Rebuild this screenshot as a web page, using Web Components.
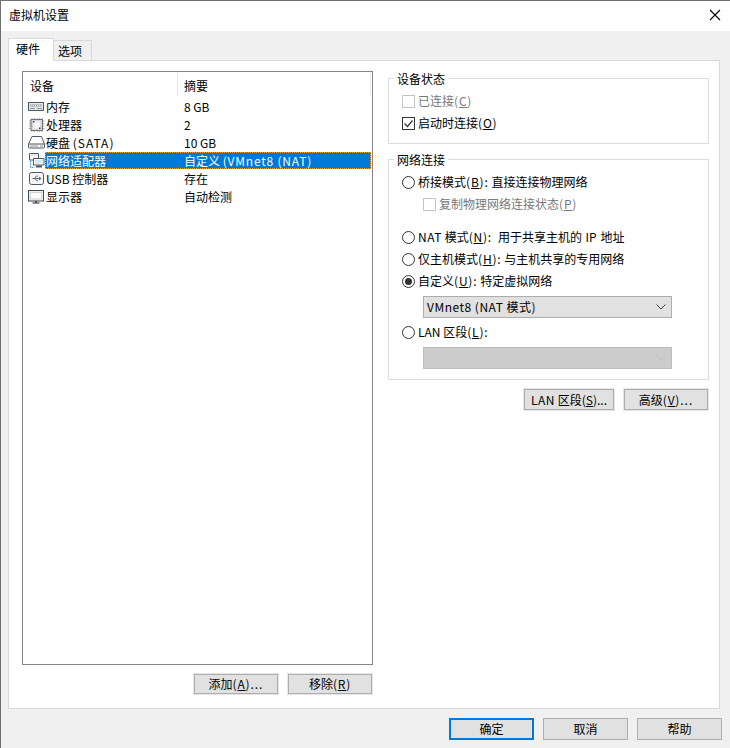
<!doctype html>
<html lang="zh-CN"><head><meta charset="utf-8"><title>虚拟机设置</title>
<style>
html,body{margin:0;padding:0;height:100%;background:#fff}
body{font:12px/16px "Noto Sans CJK SC","Liberation Sans",sans-serif;color:#000}
.p{letter-spacing:.8px}
.d{letter-spacing:1px}
.w{letter-spacing:.5px}
.ip{word-spacing:1px}
.s1{letter-spacing:1px}
.c{letter-spacing:.5px}
.cn{word-spacing:4px}
</style></head><body>
<vm-dialog heading="虚拟机设置">
  <vm-tabs slot="tabs"></vm-tabs>
  <vm-panel>
    <div slot="left">
      <vm-list>
        <vm-row icon="mem">内存<span slot="value">8 GB</span></vm-row>
        <vm-row icon="cpu">处理器<span slot="value">2</span></vm-row>
        <vm-row icon="disk">硬盘 <span class="s1">(SATA)</span><span slot="value">10 GB</span></vm-row>
        <vm-row icon="net" selected>网络适配器<span slot="value">自定义 <span class="p">(VMnet8 (NAT)</span></span></vm-row>
        <vm-row icon="usb">USB 控制器<span slot="value">存在</span></vm-row>
        <vm-row icon="mon">显示器<span slot="value">自动检测</span></vm-row>
      </vm-list>
    </div>
    <vm-btn slot="leftbtn">添加<span class="p">(<u>A</u>)</span><span class="d">...</span></vm-btn>
    <vm-btn slot="leftbtn">移除<span class="p">(<u>R</u>)</span></vm-btn>
    <vm-group slot="right" legend="设备状态" pb="9">
      <vm-choice type="check" disabled>已连接<span class="p">(<u>C</u>)</span></vm-choice>
      <vm-choice type="check" checked>启动时连接<span class="p">(<u>O</u>)</span></vm-choice>
    </vm-group>
    <vm-group slot="right" legend="网络连接" pb="10">
      <vm-choice type="radio">桥接模式<span class="p">(<u>B</u>)</span><span class="c">: </span>直接连接物理网络</vm-choice>
      <vm-choice type="check" disabled indent>复制物理网络连接状态<span class="p">(<u>P</u>)</span></vm-choice>
      <vm-choice type="radio" gap="11"><span class="w">NAT</span> 模式<span class="p">(<u>N</u>)</span><span class="cn">: </span>用于共享主机的<span class="ip"> IP </span>地址</vm-choice>
      <vm-choice type="radio">仅主机模式<span class="p">(<u>H</u>)</span><span class="c">: </span>与主机共享的专用网络</vm-choice>
      <vm-choice type="radio" checked>自定义<span class="p">(<u>U</u>)</span><span class="c">: </span>特定虚拟网络</vm-choice>
      <vm-select gap="4"><span class="w">VMnet8 (NAT 模式)</span></vm-select>
      <vm-choice type="radio" gap="3">LAN 区段<span class="p">(<u>L</u>)</span>:</vm-choice>
      <vm-select gap="4" disabled></vm-select>
    </vm-group>
    <vm-btn slot="rightbtn" w="92" h="23"><span class="w">LAN</span> 区段(<u>S</u>)...</vm-btn>
    <vm-btn slot="rightbtn" h="23">高级<span class="p">(<u>V</u>)</span><span class="d">...</span></vm-btn>
  </vm-panel>
  <vm-btn slot="footer" primary w="85">确定</vm-btn>
  <vm-btn slot="footer" w="85">取消</vm-btn>
  <vm-btn slot="footer" w="85">帮助</vm-btn>
</vm-dialog>
<script>
const def=(n,html)=>customElements.define(n,class extends HTMLElement{
  constructor(){super();this.attachShadow({mode:'open'});}
  connectedCallback(){this.shadowRoot.innerHTML=typeof html==='function'?html(this):html;}
});
def('vm-dialog',el=>`<style>
:host{display:flex;flex-direction:column;width:730px;height:748px;box-sizing:border-box;border-top:1px solid #707070;border-left:1px solid #707070;background:#f0f0f0}
.t{height:30px;box-sizing:border-box;flex:none;background:#fff;display:flex;align-items:center;justify-content:space-between;padding:0 9px 2px 8px}
.t svg{display:block}
.m{flex:1;display:flex;flex-direction:column;padding:0 8px 0 7px;min-height:0}
.f{flex:none;display:flex;justify-content:flex-end;gap:9px;padding:9px 0 8px}
</style>
<div class="t"><span>${el.getAttribute('heading')}</span><svg width="12" height="12" viewBox="0 0 12 12"><path d="M1 1l10 10M11 1L1 11" stroke="#000" stroke-width="1.1" fill="none"/></svg></div>
<div class="m"><slot name="tabs"></slot><slot></slot><div class="f"><slot name="footer"></slot></div></div>`);
def('vm-tabs',`<style>
:host{display:flex;align-items:flex-end;height:29px;flex:none;position:relative;z-index:1}
div{box-sizing:border-box;border:1px solid #d9d9d9;border-bottom:0}
.a{width:46px;height:23px;background:#fff;margin-bottom:-1px;line-height:20px;padding-left:7px}
.b{width:38px;height:20px;background:#f0f0f0;border-left:0;line-height:20px;padding-left:4px}
</style><div class="a">硬件</div><div class="b">选项</div>`);
def('vm-panel',`<style>
:host{display:flex;flex:1;min-height:0;box-sizing:border-box;margin-right:2px;background:#fff;border:1px solid #d9d9d9;padding:10px 10px 13px 13px;gap:15px}
.l{width:351px;display:flex;flex-direction:column;flex:none}
::slotted([slot=left]){flex:1;display:flex;min-height:0}
.br{display:flex;justify-content:flex-end;gap:8px;margin-top:8px}
.r{width:321px;flex:none;display:flex;flex-direction:column}
.rb{display:flex;justify-content:flex-end;gap:8px}
</style>
<div class="l"><slot name="left"></slot><div class="br"><slot name="leftbtn"></slot></div></div>
<div class="r"><slot name="right"></slot><div class="rb"><slot name="rightbtn"></slot></div></div>`);
def('vm-list',`<style>
:host{display:block;flex:1;box-sizing:border-box;border:1px solid #828790;background:#fff}
.h{display:flex;height:26px}
.h div{height:24px;line-height:27px;box-sizing:border-box}
.c1{width:155px;padding-left:7px;border-right:1px solid #e5e5e5}
.c2{flex:1;padding-left:6px;border-right:1px solid #e5e5e5;margin-right:1px}
</style><div class="h"><div class="c1">设备</div><div class="c2">摘要</div></div><slot></slot>`);
const D='#4d5761',G='#8b939b';
const icons={
mem:`<rect x=".5" y="4.500" width="15" height="8" fill="#e4e7ea" stroke="${D}"/><path d="M2 6.500h12v2H2z" fill="#9aa3ab"/><path d="M3 7.500h1M5 7.500h1M7 7.500h1M9 7.500h1M11 7.500h1M13 7.500h1" stroke="#e8e8e8"/><path d="M2 10.500h5M9 10.500h5" stroke="${G}"/>`,
cpu:`<path d="M4 2v14M6.500 2v14M9 2v14M11.500 2v14M14 2v14M1 5h15.500M1 7.500h15.500M1 10h15.500M1 12.500h15.500" stroke="#a4a9ae"/><rect x="3" y="3.500" width="11.500" height="11" fill="#d6d8da" stroke="#6d757c"/><rect x="5.500" y="5.500" width="6.500" height="7" fill="#f6f6f6"/><path d="M5 5h1.500v1.500H5zM11 11.500h1.500V13H11z" fill="#3e474f"/>`,
disk:`<path d="M4 2.500h9.500l3 7.500v3a1 1 0 0 1-1 1H1.500a1 1 0 0 1-1-1v-3z" fill="#fdfdfd" stroke="${D}"/><path d="M.5 10h16" stroke="${D}"/><path d="M2 12h8M12 12h3" stroke="${G}"/>`,
net:`<path d="M1.500 1.500h9v6.500h-9z" fill="#fff" stroke="${D}"/><path d="M3 3h6" stroke="#c9d3dc"/><path d="M5.500 6.500h10.500v6.500h-10.500z" fill="#fff" stroke="${D}"/><path d="M7 8h7.500v3.500H7z" fill="#d5e7f5"/><path d="M8 14.500h6" stroke="${D}" stroke-width="2"/><path d="M2.500 9v6.500h4" fill="none" stroke="#2f8fd8" stroke-dasharray="1.500 1"/>`,
usb:`<rect x="1.500" y="2.500" width="14" height="12" rx="2" fill="#f3f4f5" stroke="${D}"/><path d="M4.500 8.500h8" stroke="#5f6972"/><path d="M11 6.500l2.500 2-2.500 2z" fill="#5f6972"/><path d="M6.500 8.500l2-2.500h1.500M7 8.500l1.500 2H10" fill="none" stroke="#5f6972"/>`,
mon:`<rect x=".5" y="2.500" width="15" height="10.500" fill="#eef0f2" stroke="#3c454e"/><rect x="2.500" y="4.500" width="11" height="6.500" fill="#fbfbfb" stroke="#b9c0c6" stroke-width=".6"/><path d="M8 13v1.500" stroke="#3c454e" stroke-width="2"/><path d="M4.500 15h7" stroke="#3c454e" stroke-width="1.200"/>`};
def('vm-row',el=>`<style>
:host{display:flex;height:18px;padding-left:5px;padding-right:1px}
svg{width:17px;height:18px;flex:none;display:block}
.s{flex:1;display:flex;height:17px;line-height:17px;box-sizing:border-box;}
.n{width:139px;padding-left:1px;box-sizing:border-box}
.sel{background:#0078d7;color:#fff;outline:1px dotted #e8a33a;outline-offset:-1px}
</style><svg viewBox="0 0 17 18">${icons[el.getAttribute('icon')]}</svg><div class="s ${el.hasAttribute('selected')?'sel':''}"><span class="n"><slot></slot></span><span><slot name="value"></slot></span></div>`);
def('vm-group',el=>`<style>
:host{display:block;margin-bottom:8px}
fieldset{margin:0;padding:4px 0 ${el.getAttribute('pb')}px;border:1px solid #dcdcdc;min-width:0}
legend{margin-left:5px;padding:0 3px;height:15px;line-height:16px}
div{padding-left:13px}
</style><fieldset><legend>${el.getAttribute('legend')}</legend><div><slot></slot></div></fieldset>`);
def('vm-choice',el=>{
 const on=el.hasAttribute('checked'),dis=el.hasAttribute('disabled'),c=dis?'#c4c4c4':'#333';
 const mark=el.getAttribute('type')==='radio'
  ?`<svg width="13" height="13" viewBox="0 0 13 13"><circle cx="6.500" cy="6.500" r="6" fill="#fff" stroke="#333"/>${on?'<circle cx="6.500" cy="6.500" r="3.500" fill="#333"/>':''}</svg>`
  :`<svg width="13" height="13" viewBox="0 0 13 13"><rect x=".5" y=".5" width="12" height="12" fill="#fff" stroke="${c}"/>${on?'<path d="M2.500 6.500l3 3 5-6" fill="none" stroke="#333" stroke-width="1.200"/>':''}</svg>`;
 return `<style>
:host{display:flex;align-items:center;height:22px;gap:3px;${dis?'color:#787878;':''}margin-top:${el.getAttribute('gap')||0}px;${el.hasAttribute('indent')?'padding-left:21px;':''}}
svg{display:block;flex:none}
</style>${mark}<span><slot></slot></span>`});
def('vm-select',el=>{const d=el.hasAttribute('disabled');return `<style>
:host{display:flex;align-items:center;justify-content:space-between;box-sizing:border-box;width:249px;height:22px;margin-left:21px;margin-top:${el.getAttribute('gap')||0}px;background:${d?'#cccccc':'#e1e1e1'};border:1px solid ${d?'#bcbcbc':'#adadad'};padding:0 5px 0 3px}
svg{display:block}
</style><span><slot></slot></span><svg width="10" height="6" viewBox="0 0 10 6"><path d="M.5 .5L5 5 9.500 .5" fill="none" stroke="${d?'#bfbfbf':'#444'}" stroke-width="1"/></svg>`});
def('vm-btn',el=>{const p=el.hasAttribute('primary'),w=el.getAttribute('w')||86,h=el.getAttribute('h')||22;return `<style>
:host{display:flex;align-items:center;justify-content:center;box-sizing:border-box;width:${w}px;height:${h}px;background:#e1e1e1;flex:none;${p?'border:2px solid #0078d7':el.slot==='footer'?'border:1px solid #adadad':'border:1px solid #e6e6e6;box-shadow:inset 0 0 0 1px #adadad'}}
</style><span><slot></slot></span>`});
</script>
</body></html>
